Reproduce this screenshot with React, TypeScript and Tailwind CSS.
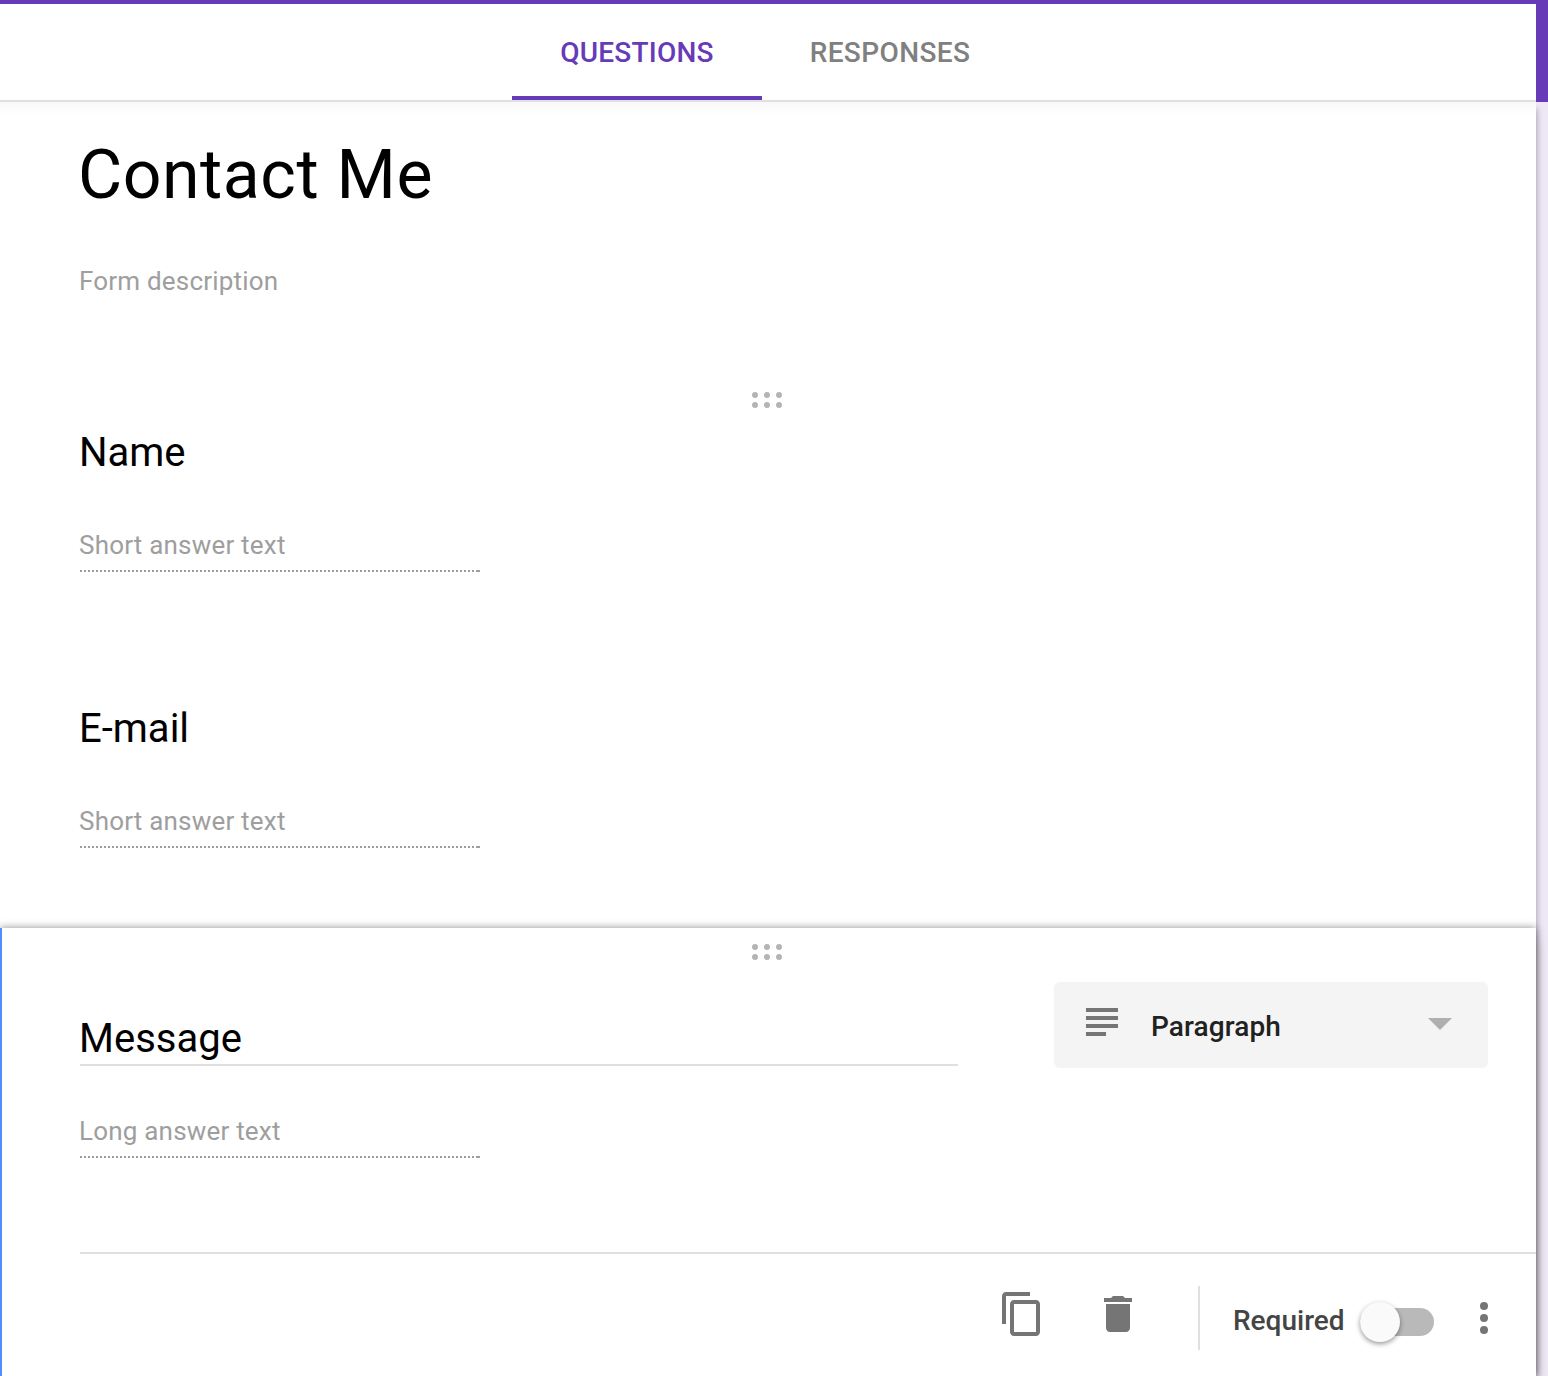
function DragHandle() {
  return (
    <svg width="32" height="16" viewBox="0 0 32 16" className="block fill-[#b4b4b4]" aria-hidden="true">
      {[3, 13].map((cy) => [4, 16, 28].map((cx) => <circle key={`${cx}-${cy}`} cx={cx} cy={cy} r="3" />))}
    </svg>
  );
}

function DottedRule() {
  return (
    <div className="flex h-0.5 w-[400px]">
      <div className="w-[398px] bg-[repeating-linear-gradient(90deg,#9e9e9e_0px,#9e9e9e_2px,transparent_2px,transparent_4px)]" />
      <div className="w-0.5 bg-[#9e9e9e]" />
    </div>
  );
}

function AnswerLine({ text }: { text: string }) {
  return (
    <div className="w-[400px]">
      <p className="-ml-px h-[51px] text-[26px] leading-[52px] tracking-[0.2px] text-[#9e9e9e]">{text}</p>
      <DottedRule />
    </div>
  );
}

function Question({ title, handle }: { title: string; handle?: boolean }) {
  return (
    <section className="h-[276px] px-20 pt-4">
      <div className="flex h-4 justify-center pr-0.5">{handle && <DragHandle />}</div>
      <h2 className="mt-[21px] mb-[42px] -ml-px text-[40px] leading-[48px] font-normal text-black">{title}</h2>
      <AnswerLine text="Short answer text" />
    </section>
  );
}

function Tabs() {
  return (
    <nav className="flex h-[98px] items-stretch border-b-2 border-[#e0e0e0] bg-white pl-[512px] text-[28px] leading-[98px] font-medium">
      <a className="h-24 w-[250px] border-b-4 border-[#673ab7] text-center tracking-[0.2px] text-[#673ab7]">QUESTIONS</a>
      <a className="h-24 w-64 text-center tracking-[0.4px] text-[#808080]">RESPONSES</a>
    </nav>
  );
}

function TypeSelect() {
  return (
    <button className="flex h-[86px] w-[434px] items-center rounded-md bg-[#f4f4f4] pr-9 pl-8">
      <svg width="32" height="28" viewBox="0 0 32 28" className="mb-1.5 fill-[#757575]" aria-hidden="true">
        <path d="M0 0h32v4H0zM0 8h32v4H0zM0 16h32v4H0zM0 24h20v4H0z" />
      </svg>
      <span className="ml-[33px] pt-1 text-[28px] leading-10 font-medium tracking-[0.1px] text-[#212121]">Paragraph</span>
      <svg width="24" height="12" viewBox="0 0 24 12" className="mb-0.5 ml-auto fill-[#afafaf]" aria-hidden="true">
        <path d="M0 0h24L12 12z" />
      </svg>
    </button>
  );
}

function QuestionFooter() {
  return (
    <footer className="ml-[78px] flex h-[124px] items-start border-t-2 border-[#e0e0e0]">
      <svg width="48" height="48" viewBox="0 0 24 24" className="mt-9 ml-[918px] fill-[#757575]" aria-label="Duplicate">
        <path d="M16 1H4c-1.1 0-2 .9-2 2v14h2V3h12V1zm3 4H8c-1.1 0-2 .9-2 2v14c0 1.1.9 2 2 2h11c1.1 0 2-.9 2-2V7c0-1.1-.9-2-2-2zm0 16H8V7h11v14z" />
      </svg>
      <svg width="48" height="48" viewBox="0 0 24 24" className="mt-9 ml-12 fill-[#757575]" aria-label="Delete">
        <path d="M6 19c0 1.1.9 2 2 2h8c1.1 0 2-.9 2-2V7H6v12zM19 4h-3.5l-1-1h-5l-1 1H5v2h14V4z" />
      </svg>
      <div className="mt-8 ml-14 h-16 w-0.5 bg-[#e0e0e0]" />
      <span className="mt-[47px] ml-[33px] w-[127px] text-[28px] leading-10 font-medium text-[#444444]">Required</span>
      <div className="mt-[54px] flex h-7 w-[74px] items-center rounded-full bg-[#b9b9b9]">
        <div className="size-10 shrink-0 rounded-full bg-[#fafafa] shadow-[0_2px_5px_rgba(0,0,0,0.4)]" />
      </div>
      <svg width="8" height="32" viewBox="0 0 8 32" className="mt-12 ml-[46px] fill-[#757575]" aria-label="More options">
        <circle cx="4" cy="4" r="4" />
        <circle cx="4" cy="16" r="4" />
        <circle cx="4" cy="28" r="4" />
      </svg>
    </footer>
  );
}

function ActiveQuestion() {
  return (
    <section className="relative h-[448px] border-l-2 border-[#4d90fe] bg-white shadow-[0_0_8px_rgba(0,0,0,0.46),0_12px_12px_rgba(0,0,0,0.15)]">
      <div className="flex h-[54px] justify-center pt-4 pr-1">
        <DragHandle />
      </div>
      <div className="flex h-[270px] justify-between pr-12 pl-[78px]">
        <div className="w-[878px]">
          <h2 className="h-[84px] border-b-2 border-[#e0e0e0] pt-[33px] text-[40px] leading-[48px] font-normal text-black">
            <span className="-ml-px">Message</span>
          </h2>
          <div className="pt-[39px]">
            <AnswerLine text="Long answer text" />
          </div>
        </div>
        <TypeSelect />
      </div>
      <QuestionFooter />
    </section>
  );
}

export default function App() {
  return (
    <div className="h-[1376px] w-[1548px] overflow-hidden bg-[linear-gradient(#673ab7_102px,#ede7f6_102px)] pt-1 font-['Roboto',sans-serif]">
      <main className="w-[1536px]">
        <Tabs />
        <div className="bg-white bg-[linear-gradient(#f8f8f8,#ffffff_14px)] shadow-[4px_4px_6px_-3px_rgba(0,0,0,0.28)]">
          <header className="h-[274px] px-20 pt-[33px]">
            <h1 className="-ml-0.5 text-[68px] leading-20 font-normal tracking-[0.5px] text-black">Contact Me</h1>
            <p className="mt-[46px] -ml-px text-[26px] leading-10 tracking-[0.2px] text-[#9e9e9e]">Form description</p>
          </header>
          <Question title="Name" handle />
          <Question title="E-mail" />
          <ActiveQuestion />
        </div>
      </main>
    </div>
  );
}
